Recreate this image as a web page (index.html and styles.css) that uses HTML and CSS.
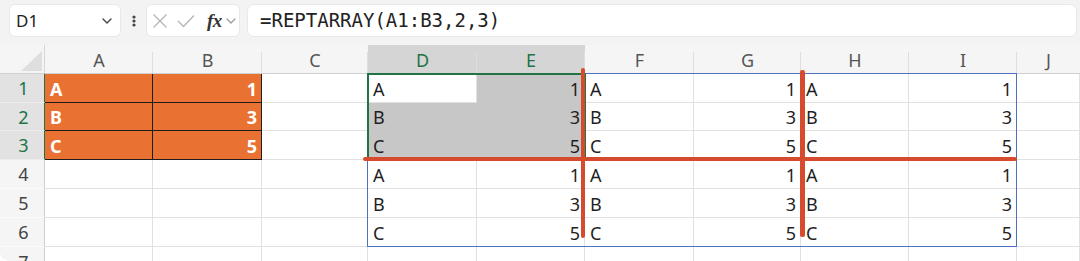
FILE: index.html
```html
<!DOCTYPE html>
<html lang="en">
<head>
<meta charset="utf-8">
<title>REPTARRAY</title>
<link rel="stylesheet" href="styles.css">
</head>
<body>
<div class="app">
  <div class="toolbar">
    <div class="namebox">
      <span class="name">D1</span>
      <svg class="chev" width="10" height="6" viewBox="0 0 10 6"><path d="M1 1 L5 5 L9 1" fill="none" stroke="#444" stroke-width="1.4" stroke-linecap="round" stroke-linejoin="round"/></svg>
    </div>
    <div class="dots">
      <svg width="4" height="12" viewBox="0 0 4 12"><circle cx="2" cy="2" r="1.6" fill="#444"/><circle cx="2" cy="6" r="1.6" fill="#444"/><circle cx="2" cy="10" r="1.6" fill="#444"/></svg>
    </div>
    <div class="fxbox">
      <svg class="ico" width="16" height="16" viewBox="0 0 16 16"><path d="M1.5 1.5 L14.5 14.5 M14.5 1.5 L1.5 14.5" stroke="#b5b5b5" stroke-width="1.3" fill="none"/></svg>
      <svg class="ico" width="18" height="14" viewBox="0 0 18 14"><path d="M1 7 L6.5 12.5 L17 1.5" stroke="#b5b5b5" stroke-width="1.3" fill="none"/></svg>
      <span class="fx">fx</span>
      <svg class="chev2" width="10" height="6" viewBox="0 0 10 6"><path d="M1 1 L5 5 L9 1" fill="none" stroke="#9a9a9a" stroke-width="1.2" stroke-linecap="round" stroke-linejoin="round"/></svg>
    </div>
    <div class="formula">=REPTARRAY(A1:B3,2,3)</div>
  </div>

  <div class="sheet">
    <div class="corner"><svg width="24" height="22" viewBox="0 0 24 22"><polygon points="23,1 23,21 2,21" fill="#dedede"/></svg></div>
    <div class="ch">A</div>
    <div class="ch">B</div>
    <div class="ch">C</div>
    <div class="ch on">D</div>
    <div class="ch on">E</div>
    <div class="ch">F</div>
    <div class="ch">G</div>
    <div class="ch">H</div>
    <div class="ch">I</div>
    <div class="ch last">J</div>

    <div class="rh on">1</div>
    <div class="c o">A</div>
    <div class="c o n">1</div>
    <div class="c"></div>
    <div class="c">A</div>
    <div class="c s n">1</div>
    <div class="c">A</div>
    <div class="c n">1</div>
    <div class="c">A</div>
    <div class="c n">1</div>
    <div class="c"></div>

    <div class="rh on">2</div>
    <div class="c o">B</div>
    <div class="c o n">3</div>
    <div class="c"></div>
    <div class="c s">B</div>
    <div class="c s n">3</div>
    <div class="c">B</div>
    <div class="c n">3</div>
    <div class="c">B</div>
    <div class="c n">3</div>
    <div class="c"></div>

    <div class="rh on">3</div>
    <div class="c o">C</div>
    <div class="c o n">5</div>
    <div class="c"></div>
    <div class="c s">C</div>
    <div class="c s n">5</div>
    <div class="c">C</div>
    <div class="c n">5</div>
    <div class="c">C</div>
    <div class="c n">5</div>
    <div class="c"></div>

    <div class="rh">4</div>
    <div class="c"></div>
    <div class="c"></div>
    <div class="c"></div>
    <div class="c">A</div>
    <div class="c n">1</div>
    <div class="c">A</div>
    <div class="c n">1</div>
    <div class="c">A</div>
    <div class="c n">1</div>
    <div class="c"></div>

    <div class="rh">5</div>
    <div class="c"></div>
    <div class="c"></div>
    <div class="c"></div>
    <div class="c">B</div>
    <div class="c n">3</div>
    <div class="c">B</div>
    <div class="c n">3</div>
    <div class="c">B</div>
    <div class="c n">3</div>
    <div class="c"></div>

    <div class="rh">6</div>
    <div class="c"></div>
    <div class="c"></div>
    <div class="c"></div>
    <div class="c">C</div>
    <div class="c n">5</div>
    <div class="c">C</div>
    <div class="c n">5</div>
    <div class="c">C</div>
    <div class="c n">5</div>
    <div class="c"></div>

    <div class="rh r7">7</div>
    <div class="c"></div>
    <div class="c"></div>
    <div class="c"></div>
    <div class="c"></div>
    <div class="c"></div>
    <div class="c"></div>
    <div class="c"></div>
    <div class="c"></div>
    <div class="c"></div>
    <div class="c"></div>

    <div class="spill"></div>
    <div class="sel"></div>
    <div class="red v1"></div>
    <div class="red v2"></div>
    <div class="red h1"></div>
  </div>
</div>
</body>
</html>
```

FILE: styles.css
```css
html, body {
  margin: 0;
  padding: 0;
  background: #ffffff;
}

.app {
  width: 1080px;
  height: 261px;
  background: #f3f3f3;
  border-bottom-left-radius: 10px;
  overflow: hidden;
  font-family: "Noto Sans", "Liberation Sans", sans-serif;
}

.toolbar {
  height: 45px;
  box-sizing: border-box;
  padding: 4px 3px 8px 9px;
  display: flex;
  align-items: stretch;
}

.namebox {
  width: 112px;
  box-sizing: border-box;
  background: #fff;
  border: 1px solid #e8e8e8;
  border-radius: 6px;
  display: flex;
  align-items: center;
  justify-content: space-between;
  padding: 0 8px 0 6px;
}

.name {
  font-size: 17px;
  color: #222;
  line-height: 1;
}

.dots {
  width: 25px;
  display: flex;
  align-items: center;
  justify-content: center;
}

.fxbox {
  width: 94px;
  box-sizing: border-box;
  background: #fff;
  border: 1px solid #e8e8e8;
  border-radius: 6px;
  display: flex;
  align-items: center;
  padding: 0 0 0 5px;
  gap: 0;
}

.fxbox .ico:first-child {
  margin-right: 9px;
}

.fxbox .ico:nth-child(2) {
  margin-right: 12px;
}

.fx {
  font-family: "Liberation Serif", "DejaVu Serif", serif;
  font-style: italic;
  font-weight: 700;
  font-size: 19px;
  color: #333;
  line-height: 1;
  margin-right: 4px;
  letter-spacing: -0.5px;
}

.formula {
  flex: 1;
  margin-left: 7px;
  background: #fff;
  border: 1px solid #e8e8e8;
  border-radius: 7px;
  display: flex;
  align-items: center;
  padding-left: 12px;
  font-family: "DejaVu Sans Mono", "Liberation Mono", monospace;
  font-size: 19px;
  color: #222;
  line-height: 1;
}

.sheet {
  position: relative;
  display: grid;
  grid-template-columns: 45px 108px 109px 106px 109px 108px 109px 107px 108px 108px 1fr;
  grid-template-rows: 29px 29px 28px 29px 29px 29px 29px 1fr;
  height: 216px;
}

.corner {
  background: #f5f5f5;
  border-bottom: 1px solid #cfcfcf;
  border-right: 1px solid #d6d6d6;
  box-sizing: border-box;
  display: flex;
  align-items: flex-end;
  justify-content: flex-end;
  padding: 0 1px 1px 0;
}

.ch {
  position: relative;
  background: #f5f5f5;
  border-bottom: 1px solid #cfcfcf;
  box-sizing: border-box;
  display: flex;
  align-items: center;
  justify-content: center;
  font-size: 18px;
  color: #555;
  line-height: 1;
  padding-top: 2px;
}

.ch::after {
  content: "";
  position: absolute;
  right: 0;
  top: 7px;
  bottom: 0;
  width: 1px;
  background: #dedede;
}

.ch.last::after {
  display: none;
}

.ch.on {
  background: #d5d5d5;
  color: #217346;
  border-bottom: 1px solid #217346;
}

.rh {
  background: #f5f5f5;
  border-right: 1px solid #cfcfcf;
  border-bottom: 1px solid #fafafa;
  box-sizing: border-box;
  display: flex;
  align-items: center;
  justify-content: center;
  font-size: 18px;
  color: #444;
  line-height: 1;
  padding-left: 3px;
}

.rh.on {
  background: #e2e2e2;
  color: #217346;
  border-right: 1px solid #217346;
  border-bottom: 1px solid #ececec;
}

.rh.r7 {
  align-items: flex-start;
  padding-top: 6px;
}

.c {
  background: #fff;
  border-right: 1px solid #e1e1e1;
  border-bottom: 1px solid #e1e1e1;
  box-sizing: border-box;
  display: flex;
  align-items: center;
  padding: 1px 5px 0 5px;
  font-size: 18px;
  color: #1f1f1f;
  line-height: 1;
}

.c.n {
  justify-content: flex-end;
  padding-right: 4px;
}

.c.o {
  background: #e97132;
  color: #fff;
  font-weight: 700;
  border-right: 1px solid #1d1d1d;
  border-bottom: 1px solid #1d1d1d;
}

.c.s {
  background: #c7c7c7;
  border-right-color: #c7c7c7;
  border-bottom-color: #c7c7c7;
}

.spill {
  position: absolute;
  left: 367px;
  top: 28px;
  width: 650px;
  height: 174px;
  box-sizing: border-box;
  border: 1px solid #4a72c0;
  pointer-events: none;
}

.sel {
  position: absolute;
  left: 367px;
  top: 28px;
  width: 219px;
  height: 88px;
  box-sizing: border-box;
  border: 2px solid #217346;
  pointer-events: none;
}

.red {
  position: absolute;
  background: #d64a2d;
  border-radius: 2px;
}

.v1 {
  left: 581px;
  top: 23px;
  width: 4px;
  height: 170px;
}

.v2 {
  left: 800px;
  top: 25px;
  width: 5px;
  height: 167px;
}

.h1 {
  left: 363px;
  top: 112px;
  width: 654px;
  height: 4px;
}
```
